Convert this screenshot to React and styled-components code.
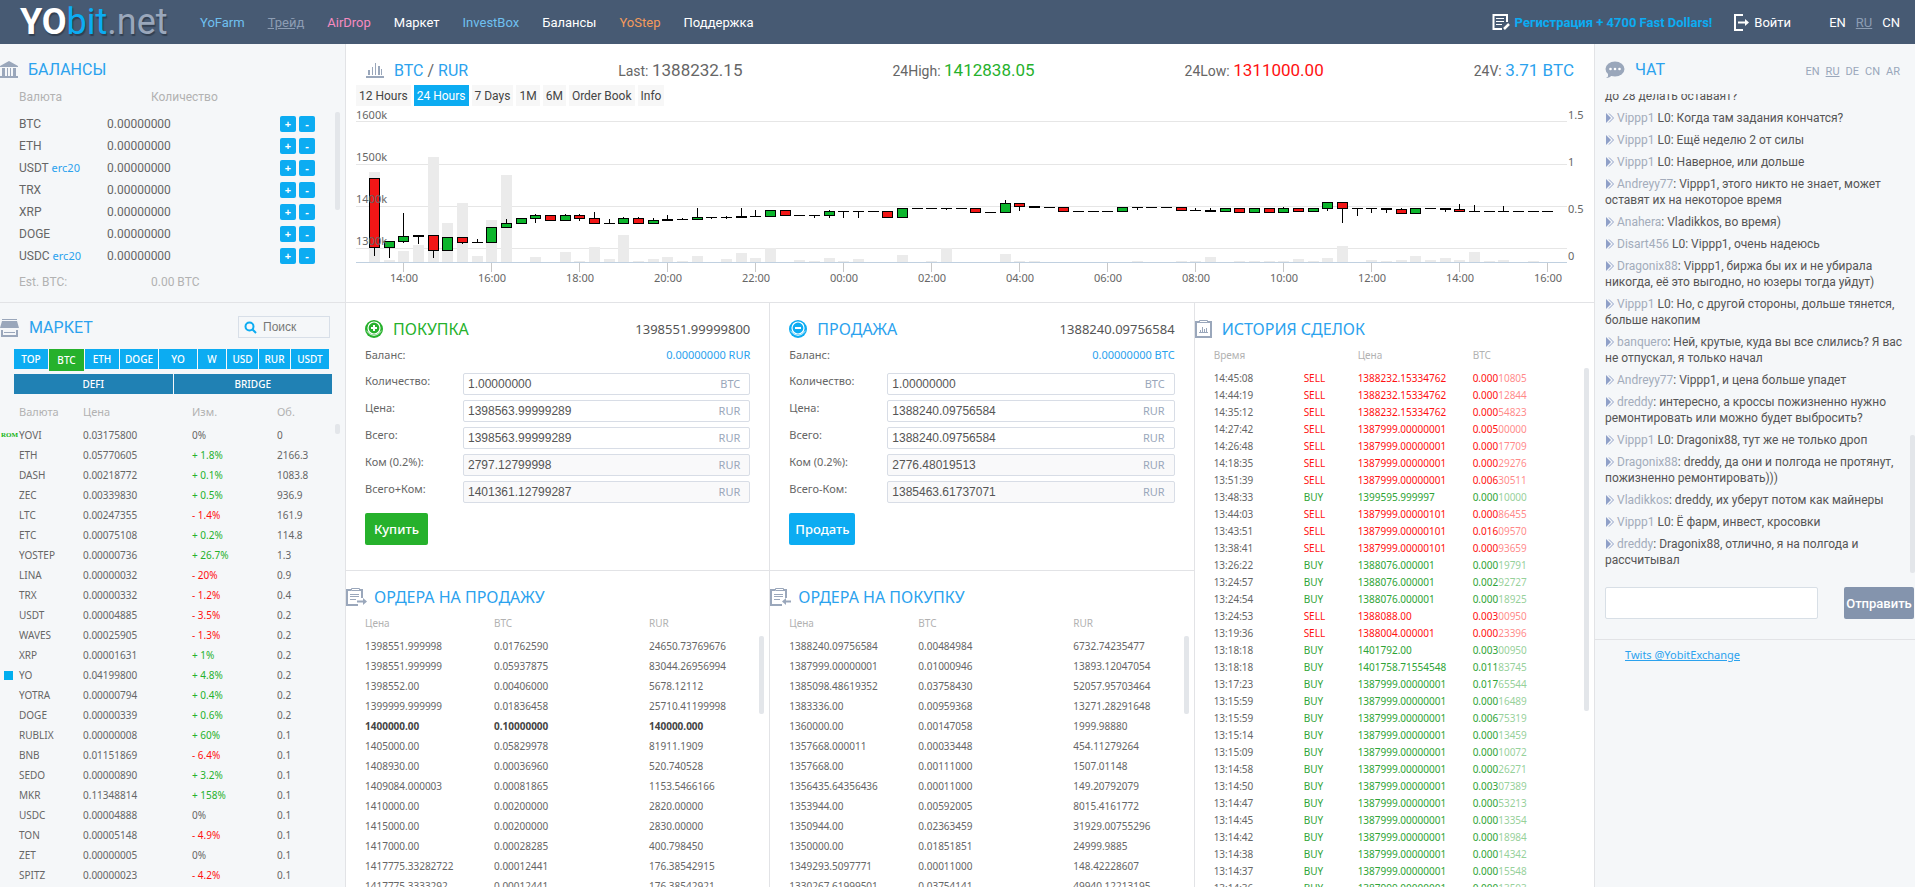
import React from 'react'
import styled, { createGlobalStyle } from 'styled-components'

const narrow = 'Roboto, "Liberation Sans", sans-serif'
const sans = '"Noto Sans", "Open Sans", sans-serif'
const arial = '"Liberation Sans", Arial, sans-serif'

const colors = {
  bar: '#475a73',
  blue: '#0cacf2',
  link: '#2ba2ee',
  deepBlue: '#2081b4',
  green: '#26b12c',
  red: '#ff1111',
  text: '#666',
  dark: '#555',
  muted: '#b2b2b2',
  icon: '#9aa7bb',
  panel: '#f5f7f9',
  line: '#e2e3e6'
}

const GlobalStyle = createGlobalStyle`
  * {
    box-sizing: border-box;
  }
  body {
    margin: 0;
    background: #fff;
    color: ${colors.text};
    font-family: ${narrow};
    font-size: 12px;
  }
  button, input {
    margin: 0;
    border: 0;
    font-family: inherit;
  }
  h1, h2, p {
    margin: 0;
    font-weight: normal;
  }
`

const Page = styled.div`
  height: 100vh;
  display: flex;
  flex-direction: column;
  overflow: hidden;
`

/* top bar */

const Topbar = styled.header`
  flex: none;
  display: flex;
  align-items: center;
  height: 44px;
  padding: 0 15px 0 20px;
  background: ${colors.bar};
  font-size: 13px;
`

const Logo = styled.a`
  width: 180px;
  color: ${colors.icon};
  font-size: 36px;
  line-height: 44px;
  text-decoration: none;
  text-shadow: 1px 2px 1px rgba(0, 0, 0, 0.3);
  b {
    color: #fff;
  }
  span {
    color: ${colors.blue};
  }
`

const Nav = styled.nav`
  display: flex;
  flex: 1;
  gap: 23px;
`

const NavLink = styled.a`
  color: ${props => props.$color || '#fff'};
  text-decoration: ${props => props.$current ? 'underline' : 'none'};
`

const Account = styled.div`
  display: flex;
  gap: 22px;
`

const AccountLink = styled.a`
  display: flex;
  align-items: center;
  gap: 5px;
  color: ${props => props.$promo ? colors.blue : '#fff'};
  font-weight: ${props => props.$promo ? 'bold' : 'normal'};
  text-decoration: none;
`

const BarLangs = styled.div`
  display: flex;
  gap: 10px;
  margin-left: 38px;
`

/* columns */

const Columns = styled.div`
  flex: 1;
  min-height: 0;
  display: grid;
  grid-template-columns: 346px minmax(0, 1fr) 321px;
`

const Side = styled.aside`
  display: flex;
  flex-direction: column;
  min-height: 0;
  background: ${colors.panel};
  border-right: ${props => props.$left ? '1px solid ' + colors.line : '0'};
  border-left: ${props => props.$left ? '0' : '1px solid ' + colors.line};
`

const Center = styled.main`
  display: flex;
  flex-direction: column;
  min-height: 0;
`

const Heading = styled.div`
  display: flex;
  align-items: center;
  gap: ${props => props.$tight ? 7 : 10}px;
  height: 24px;
  h2 {
    color: ${props => props.$green ? colors.green : colors.link};
    font-family: ${props => props.$wide ? sans : narrow};
    font-size: 16px;
    line-height: 24px;
  }
  svg {
    flex: none;
  }
`

const Slash = styled.span`
  color: ${colors.text};
`

const Scroll = styled.div`
  position: absolute;
  top: ${props => props.$top}px;
  right: 5px;
  width: 5px;
  height: ${props => props.$size}px;
  border-radius: 2px;
  background: #e3e6ea;
`

const Table = styled.table`
  width: 100%;
  border-collapse: collapse;
  table-layout: fixed;
  th {
    padding: 0;
    color: ${colors.muted};
    font-weight: normal;
    text-align: left;
  }
  td {
    padding: 0;
    white-space: nowrap;
  }
`

/* balances */

const Balances = styled.section`
  position: relative;
  flex: none;
  height: 259px;
  padding-top: 14px;
  border-bottom: 1px solid ${colors.line};
`

const BalanceHead = styled.div`
  display: grid;
  grid-template-columns: 132px 1fr;
  padding-left: 19px;
  color: ${colors.muted};
  line-height: 31px;
`

const BalanceTable = styled(Table)`
  margin-left: 19px;
  width: 296px;
  td {
    height: 22px;
    line-height: 20px;
  }
  td:first-child {
    width: 88px;
  }
  td:last-child {
    width: 35px;
  }
  a {
    color: ${colors.link};
    font-family: ${sans};
    font-size: 11px;
    text-decoration: none;
  }
`

const Pair = styled.div`
  display: flex;
  gap: 3px;
`

const Square = styled.button`
  width: 16px;
  height: 16px;
  padding: 0;
  border-radius: 2px;
  background: ${colors.blue};
  color: #fff;
  font-family: ${sans};
  font-size: 11px;
  font-weight: bold;
  line-height: 14px;
`

/* market */

const Market = styled.section`
  position: relative;
  flex: 1;
  min-height: 0;
  padding-top: 13px;
`

const MarketTop = styled.div`
  display: flex;
  justify-content: space-between;
  padding-right: 15px;
`

const Search = styled.label`
  display: flex;
  align-items: center;
  gap: 6px;
  width: 92px;
  height: 22px;
  padding-left: 5px;
  border: 1px solid #d8dfe8;
  input {
    width: 60px;
    padding: 0;
    background: transparent;
    font-family: ${arial};
    font-size: 12px;
    outline: 0;
  }
  input::placeholder {
    color: #777;
  }
`

const Tabs = styled.div`
  display: flex;
  align-items: flex-start;
  gap: 1px;
  height: 25px;
  margin-top: 9px;
  padding: 0 16px 0 14px;
`

const Tab = styled.button`
  flex: ${props => props.$grow || 34} 1 0;
  height: ${props => props.$active ? 22 : 20}px;
  padding: 0;
  background: ${props => props.$active ? colors.green : props.$deep ? colors.deepBlue : colors.blue};
  color: #fff;
  font-family: ${sans};
  font-size: 10px;
  font-weight: 500;
`

const WideTabs = styled(Tabs)`
  height: 20px;
  margin: 0;
  padding-right: 13px;
`

const MarketTable = styled(Table)`
  font-family: ${sans};
  font-size: 10px;
  th {
    height: 31px;
    padding-top: 4px;
    font-size: 11px;
  }
  td {
    height: 20px;
    line-height: 20px;
  }
`

const Change = styled.td`
  color: ${props => props.$value[0] === '+' ? colors.green : props.$value[0] === '-' ? colors.red : colors.text};
`

const Marker = styled.td`
  color: #14b514;
  font-family: "Liberation Serif", serif;
  font-size: 7px;
  font-weight: bold;
  text-align: center;
`

const Dot = styled.i`
  display: block;
  width: 9px;
  height: 9px;
  margin-left: 4px;
  background: #00aeef;
`

/* chart */

const ChartPanel = styled.section`
  height: 259px;
  flex: none;
  padding-top: 14px;
  border-bottom: 1px solid ${colors.line};
`

const Stats = styled.div`
  display: flex;
  align-items: center;
  justify-content: space-between;
  padding: 0 20px;
`

const Stat = styled.div`
  font-size: 14px;
  line-height: 24px;
  b {
    color: ${props => props.$color || colors.text};
    font-size: 17px;
    font-weight: normal;
  }
`

const Ranges = styled.div`
  display: flex;
  gap: 3px;
  padding: 2px 10px 1px;
`

const Range = styled.button`
  height: 21px;
  padding: 0 3px;
  background: ${props => props.$active ? colors.blue : '#f7f7f7'};
  color: ${props => props.$active ? '#fff' : '#444'};
  font-size: 12px;
`

const Plot = styled.svg`
  display: block;
  width: 100%;
  height: auto;
  text {
    fill: ${colors.text};
    font-family: ${sans};
    font-size: 11px;
  }
`

/* trading */

const Trading = styled.div`
  flex: 1;
  min-height: 0;
  display: grid;
  grid-template-columns: 34fr 34fr 32fr;
`

const Stack = styled.div`
  display: flex;
  flex-direction: column;
  min-width: 0;
  min-height: 0;
  border-right: ${props => props.$last ? '0' : '1px solid ' + colors.line};
`

const Form = styled.form`
  height: 268px;
  flex: none;
  padding: 14px 19px 0;
  border-bottom: 1px solid ${colors.line};
`

const FormTop = styled.div`
  display: flex;
  align-items: center;
  justify-content: space-between;
  > span {
    color: ${colors.dark};
    font-family: ${sans};
    font-size: 13px;
  }
`

const Line = styled.div`
  display: flex;
  justify-content: space-between;
  margin: 2px 0 6px;
  font-family: ${sans};
  font-size: 11px;
  line-height: 24px;
  span:last-child {
    color: ${colors.link};
  }
`

const Field = styled.label`
  display: flex;
  margin-bottom: 5px;
  font-family: ${sans};
  font-size: 11px;
  line-height: 16px;
`

const Name = styled.span`
  width: 98px;
`

const Box = styled.span`
  display: flex;
  flex: 1;
  align-items: center;
  height: 22px;
  padding: 0 9px 0 4px;
  border: 1px solid #d8dde6;
  border-radius: 2px;
  background: ${props => props.$locked ? '#f9f9fa' : '#fff'};
  color: ${colors.icon};
  input {
    flex: 1;
    min-width: 0;
    padding: 0;
    background: transparent;
    color: ${colors.dark};
    font-family: ${arial};
    font-size: 12px;
    outline: 0;
  }
`

const Submit = styled.button`
  height: 32px;
  margin-top: 5px;
  padding: 0 ${props => props.$green ? 9 : 6}px;
  border-radius: 2px;
  background: ${props => props.$green ? colors.green : colors.blue};
  color: #fff;
  font-family: ${sans};
  font-size: 13px;
  font-weight: 500;
`

const Orders = styled.section`
  position: relative;
  flex: 1;
  min-height: 0;
  padding-top: 14px;
`

const OrdersTable = styled(Table)`
  margin-left: 19px;
  width: calc(100% - 38px);
  font-family: ${sans};
  font-size: 10px;
  th {
    height: 27px;
  }
  td {
    height: 20px;
  }
  tr.total {
    color: #444;
    font-weight: bold;
  }
`

const History = styled.section`
  position: relative;
  padding-top: 14px;
`

const HistoryTable = styled(Table)`
  margin-left: 19px;
  width: calc(100% - 19px);
  font-family: ${sans};
  font-size: 10px;
  line-height: 14px;
  th {
    height: 28px;
  }
  td {
    height: 17px;
  }
`

const Trade = styled.tr`
  color: ${props => props.$buy ? '#2fa436' : colors.red};
  td:first-child {
    color: ${colors.text};
  }
  span {
    opacity: 0.5;
  }
`

/* chat */

const ChatTop = styled.div`
  display: flex;
  justify-content: space-between;
  align-items: center;
  padding: 14px 15px 0 10px;
`

const ChatLangs = styled.div`
  display: flex;
  gap: 6px;
  padding-top: 3px;
  font-size: 11px;
  a {
    color: ${colors.icon};
    text-decoration: none;
  }
  a.current {
    text-decoration: underline;
  }
`

const Messages = styled.div`
  position: relative;
  flex: none;
  display: flex;
  flex-direction: column;
  justify-content: flex-end;
  height: 480px;
  margin-top: 12px;
  padding: 0 10px;
  overflow: hidden;
`

const Message = styled.p`
  flex: none;
  margin-bottom: 6px;
  color: ${colors.dark};
  line-height: 16px;
  white-space: nowrap;
  svg {
    margin: 0 3px 0 1px;
    vertical-align: -1px;
  }
  b {
    color: #a3acbb;
    font-weight: normal;
  }
`

const ChatScroll = styled(Scroll)`
  right: 0;
`

const ChatForm = styled.form`
  flex: none;
  display: flex;
  justify-content: space-between;
  height: 66px;
  padding: 13px 1px 0 10px;
  border-bottom: 1px solid ${colors.line};
  input {
    width: 213px;
    height: 32px;
    padding: 0 6px;
    border: 1px solid #d8dfe6;
    border-radius: 2px;
  }
  button {
    width: 70px;
    height: 32px;
    padding: 0;
    border-radius: 2px;
    background: #8494ad;
    color: #fff;
    font-size: 13px;
    font-weight: 500;
  }
`

const Twits = styled.a`
  margin: 7px 0 0 30px;
  color: ${colors.link};
  font-family: ${sans};
  font-size: 11px;
`

/* icons */

const BankIcon = () => (
  <svg width='18' height='18' viewBox='0 0 18 18' fill={colors.icon}>
    <path d='M0 5 9 0l9 5v1H0zM2 7h3v8H2zM7 7h1v8H7zM10 7h1v8h-1zM13 7h3v8h-3zM0 15h18v2H0z' />
  </svg>
)

const ShopIcon = () => (
  <svg width='19' height='18' viewBox='0 0 19 18' fill={colors.icon}>
    <path d='M2 0h15v1H2zM2 2h15l2 7H0zM1 11h2v5h13v-5h2v7H1zM4 13h11v1H4z' />
  </svg>
)

const BarsIcon = () => (
  <svg width='18' height='17' viewBox='0 0 18 17' fill={colors.icon}>
    <path d='M2 8h2v5H2zM6 5h1v8H6zM9 1h1v12H9zM12 4h2v9h-2zM15 7h1v6h-1zM0 14h18v2H0z' />
  </svg>
)

const ChatIcon = () => (
  <svg width='20' height='18' viewBox='0 0 20 18'>
    <ellipse cx='10' cy='8' rx='9.5' ry='7.5' fill={colors.icon} />
    <path d='M3 12v3.500L1 17q4 0 6-3z' fill={colors.icon} />
    <circle cx='5.500' cy='8' r='1.300' fill='#fff' />
    <circle cx='10' cy='8' r='1.300' fill='#fff' />
    <circle cx='14.500' cy='8' r='1.300' fill='#fff' />
  </svg>
)

const CoinIcon = ({ color, plus }) => (
  <svg width='18' height='18' viewBox='0 0 18 18' fill='none'>
    <circle cx='9' cy='9' r='9' fill={color} />
    <circle cx='9' cy='8' r='6' stroke='#fff' strokeWidth='1.200' />
    <path d='M1.500 11q7.500 9 15 0' stroke='#fff' strokeWidth='.8' />
    <path d={plus ? 'M6 8h6M9 5v6' : 'M6 8h6'} stroke='#fff' strokeWidth='2' />
  </svg>
)

const OrdersIcon = ({ back }) => (
  <svg width='21' height='18' viewBox='0 0 21 18' fill='none' stroke={colors.icon}>
    <path d='M5 2H1v15h11M13 2h3v8' strokeWidth='2' />
    <path d='M5.500.5h8v2h-8zM4 6.500h9M4 8.500h9M4 11.500h6' />
    <path d={back ? 'M21 13.500h-6' : 'M11 13.500h7'} strokeWidth='2' />
    <path d={back ? 'm16 10-4 3.500 4 3.500z' : 'm17 10 4 3.500-4 3.500z'} fill={colors.icon} stroke='none' />
  </svg>
)

const HistoryIcon = () => (
  <svg width='17' height='18' viewBox='0 0 17 18' fill='none' stroke={colors.icon}>
    <path d='M1 2h15v15H1z' strokeWidth='2' />
    <path d='M4.500.5h8v2h-8z' fill='#fff' />
    <path d='M4 12.500h9M5.500 10v2M7.500 7v5M9.500 9v3M11.500 8v4' />
  </svg>
)

const SearchIcon = () => (
  <svg width='13' height='13' viewBox='0 0 13 13' fill='none' stroke={colors.blue} strokeWidth='2'>
    <circle cx='5.500' cy='5.500' r='4' />
    <path d='m8.500 8.500 3.500 3.500' />
  </svg>
)

const RegisterIcon = () => (
  <svg width='18' height='18' viewBox='0 0 18 18' fill='none' stroke='#fff'>
    <path d='M15 9V2H1.500v14H10' strokeWidth='2' />
    <path d='M4 5.500h8M4 8.500h8M4 11.500h6' />
    <path d='m12 16 5-5' strokeWidth='2.500' />
  </svg>
)

const LoginIcon = () => (
  <svg width='15' height='17' viewBox='0 0 15 17' fill='none' stroke='#fff' strokeWidth='2'>
    <path d='M9 1H1v15h8M4 8.500h8' />
    <path d='m11 5 4 3.500-4 3.500z' fill='#fff' stroke='none' />
  </svg>
)

const ReplyIcon = () => (
  <svg width='8' height='10' viewBox='0 0 8 10'>
    <path d='M0 0v10l5-5z' fill='#8fa0c8' />
    <path d='m3 .5 4.500 4.500L3 9.500' fill='none' stroke='#8fa0c8' />
  </svg>
)

/* data */

const parse = text => text.split('\n').map(row => row.split('|'))

const nav = [
  ['YoFarm', '#6fc0f0'],
  ['Трейд', '#8d9db3', true],
  ['AirDrop', '#f78bc0'],
  ['Маркет'],
  ['InvestBox', '#6fc0f0'],
  ['Балансы'],
  ['YoStep', '#f49a5c'],
  ['Поддержка']
]

const balances = ['BTC', 'ETH', 'USDT erc20', 'TRX', 'XRP', 'DOGE', 'USDC erc20']

const tabs = [['TOP', 34], ['BTC', 35], ['ETH', 34], ['DOGE', 38], ['YO', 38], ['W', 28], ['USD', 31], ['RUR', 31], ['USDT', 38]]

const market = parse(`YOVI|0.03175800|0%|0
ETH|0.05770605|+ 1.8%|2166.3
DASH|0.00218772|+ 0.1%|1083.8
ZEC|0.00339830|+ 0.5%|936.9
LTC|0.00247355|- 1.4%|161.9
ETC|0.00075108|+ 0.2%|114.8
YOSTEP|0.00000736|+ 26.7%|1.3
LINA|0.00000032|- 20%|0.9
TRX|0.00000332|- 1.2%|0.4
USDT|0.00004885|- 3.5%|0.2
WAVES|0.00025905|- 1.3%|0.2
XRP|0.00001631|+ 1%|0.2
YO|0.04199800|+ 4.8%|0.2
YOTRA|0.00000794|+ 0.4%|0.2
DOGE|0.00000339|+ 0.6%|0.2
RUBLIX|0.00000008|+ 60%|0.1
BNB|0.01151869|- 6.4%|0.1
SEDO|0.00000890|+ 3.2%|0.1
MKR|0.11348814|+ 158%|0.1
USDC|0.00004888|0%|0.1
TON|0.00005148|- 4.9%|0.1
ZET|0.00000005|0%|0.1
SPITZ|0.00000023|- 4.2%|0.1`)

const sellOrders = parse(`1398551.999998|0.01762590|24650.73769676
1398551.999999|0.05937875|83044.26956994
1398552.00|0.00406000|5678.12112
1399999.999999|0.01836458|25710.41199998
1400000.00|0.10000000|140000.000
1405000.00|0.05829978|81911.1909
1408930.00|0.00036960|520.740528
1409084.000003|0.00081865|1153.5466166
1410000.00|0.00200000|2820.00000
1415000.00|0.00200000|2830.00000
1417000.00|0.00028285|400.798450
1417775.33282722|0.00012441|176.38542915
1417775.3333292|0.00012441|176.38542921`)

const buyOrders = parse(`1388240.09756584|0.00484984|6732.74235477
1387999.00000001|0.01000946|13893.12047054
1385098.48619352|0.03758430|52057.95703464
1383336.00|0.00959368|13271.28291648
1360000.00|0.00147058|1999.98880
1357668.000011|0.00033448|454.11279264
1357668.00|0.00111000|1507.01148
1356435.64356436|0.00011000|149.20792079
1353944.00|0.00592005|8015.4161772
1350944.00|0.02363459|31929.00755296
1350000.00|0.01851851|24999.9885
1349293.5097771|0.00011000|148.42228607
1330267.61999501|0.03754141|49940.12213195`)

const trades = parse(`14:45:08|SELL|1388232.15334762|0.00010805
14:44:19|SELL|1388232.15334762|0.00012844
14:35:12|SELL|1388232.15334762|0.00054823
14:27:42|SELL|1387999.00000001|0.00500000
14:26:48|SELL|1387999.00000001|0.00017709
14:18:35|SELL|1387999.00000001|0.00029276
13:51:39|SELL|1387999.00000001|0.00630511
13:48:33|BUY|1399595.999997|0.00010000
13:44:03|SELL|1387999.00000101|0.00086455
13:43:51|SELL|1387999.00000101|0.01609570
13:38:41|SELL|1387999.00000101|0.00093659
13:26:22|BUY|1388076.000001|0.00019791
13:24:57|BUY|1388076.000001|0.00292727
13:24:54|BUY|1388076.000001|0.00018925
13:24:53|SELL|1388088.00|0.00300950
13:19:36|SELL|1388004.000001|0.00023396
13:18:18|BUY|1401792.00|0.00300950
13:18:18|BUY|1401758.71554548|0.01183745
13:17:23|BUY|1387999.00000001|0.01765544
13:15:59|BUY|1387999.00000001|0.00016489
13:15:59|BUY|1387999.00000001|0.00675319
13:15:14|BUY|1387999.00000001|0.00013459
13:15:09|BUY|1387999.00000001|0.00010072
13:14:58|BUY|1387999.00000001|0.00026271
13:14:50|BUY|1387999.00000001|0.00307389
13:14:47|BUY|1387999.00000001|0.00053213
13:14:45|BUY|1387999.00000001|0.00013354
13:14:42|BUY|1387999.00000001|0.00018984
13:14:38|BUY|1387999.00000001|0.00014342
13:14:37|BUY|1387999.00000001|0.00015548
13:14:36|BUY|1387999.00000001|0.00013503`)

const messages = [
  ['Vippp1', ' L0: Когда там задания кончатся?'],
  ['Vippp1', ' L0: Ещё неделю 2 от силы'],
  ['Vippp1', ' L0: Наверное, или дольше'],
  ['Andreyy77', ': Vippp1, этого никто не знает, может', 'оставят их на некоторое время'],
  ['Anahera', ': Vladikkos, во время)'],
  ['Disart456', ' L0: Vippp1, очень надеюсь'],
  ['Dragonix88', ': Vippp1, биржа бы их и не убирала', 'никогда, её это выгодно, но юзеры тогда уйдут)'],
  ['Vippp1', ' L0: Но, с другой стороны, дольше тянется,', 'больше накопим'],
  ['banquero', ': Ней, крутые, куда вы все слились? Я вас', 'не отпускал, я только начал'],
  ['Andreyy77', ': Vippp1, и цена больше упадет'],
  ['dreddy', ': интересно, а кроссы пожизненно нужно', 'ремонтировать или можно будет выбросить?'],
  ['Vippp1', ' L0: Dragonix88, тут же не только дроп'],
  ['Dragonix88', ': dreddy, да они и полгода не протянут,', 'пожизненно ремонтировать)))'],
  ['Vladikkos', ': dreddy, их уберут потом как майнеры'],
  ['Vippp1', ' L0: Ё фарм, инвест, кросовки'],
  ['dreddy', ': Dragonix88, отлично, я на полгода и', 'рассчитывал']
]

// g = up, r = down, k = flat: kind, body top, body bottom, high, low
const candles = `r 77 147 77 155,g 140 147 140 157,g 135 141 112 142,k 134 136 134 143,r 134 150 134 157,g 136 150,r 136 142 136 143,k 141 142 138,g 126 142,g 122 127 118
g 117 123,g 114 118 113 122,r 114 120,g 114 120 113,r 114 118 113 120,r 117 123 111,k 122 123 118,g 117 123 116,r 117 123 116,g 119 123 117
k 118 120 114,k 118 119 117,g 116 119 107,k 116 117 116 118,k 116 117 115 118,k 115 117 107,k 115 116 109,g 109 116,r 109 115,k 114 115
k 114 115 114 117,g 110 115 109 117,k 110 111 110 117,k 110 111 110 117,k 110 111,r 110 117,g 107 117,k 107 108,k 107 108,k 107 108 107 109
k 107 108,r 107 112,k 111 112,g 102 112 99,r 102 106 102 110,k 105 107,k 106 107,r 106 111,k 110 111,k 110 111
k 110 111,g 106 111,k 106 107 106 109,k 106 107,k 106 107,r 106 110,k 109 110 107,k 109 111 107,g 107 111,r 107 112
g 107 112,r 107 112,g 107 112 106,r 107 111,g 107 111,g 101 108 101 110,r 101 108 101 122,k 107 108 107 115,k 107 108 107 112,k 107 109 107 112
r 108 113 107,g 107 113,k 107 108,k 107 109 107 111,r 108 111 103,k 110 111 104,k 110 111,k 110 111 105,k 110 111,k 110 111
k 110 111`.split(/[,\n]/).map(item => item.split(' '))

const volumes = [
  90, 2, 11, 17, 105, 39, 59, 6, 42, 87, 0, 5, 0, 10, 1, 15, 3, 27, 1, 3, 5, 1, 6, 0, 3, 9, 4, 14, 0, 2, 1, 4, 1, 3, 0, 0, 7, 0, 1, 14,
  0, 0, 0, 8, 1, 1, 0, 0, 0, 0, 0, 0, 1, 0, 0, 1, 1, 5, 0, 1, 1, 1, 1, 3, 1, 4, 16, 0, 2, 1, 2, 6, 2, 4, 2, 10, 1, 2, 0, 1
]

const hours = ['14:00', '16:00', '18:00', '20:00', '22:00', '00:00', '02:00', '04:00', '06:00', '08:00', '10:00', '12:00', '14:00', '16:00']

const slot = i => Math.round(28 + i * 14.667)

const Chart = () => (
  <Plot viewBox='0 6 1248 190' shapeRendering='crispEdges'>
    {[20, 63, 105, 147].map(y => <rect key={y} x='10' y={y} width='1211' height='1' fill='#e6e6e6' />)}
    {volumes.map((v, i) => <rect key={i} x={slot(i) - 5} y={161 - v} width='11' height={v} fill='#ebebeb' />)}
    <rect x='10' y='161' width='1211' height='1' fill='#c0d0e0' />
    {candles.map(([kind, top, bottom, high = top, low = bottom], i) => (
      <g key={i}>
        <rect x={slot(i)} y={high} width='1' height={low - high} />
        <rect x={slot(i) - 5} y={top} width='11' height={bottom - top} />
        {kind !== 'k' && (
          <rect x={slot(i) - 4} y={+top + 1} width='9' height={bottom - top - 2} fill={kind === 'g' ? '#0cb52c' : '#f21616'} />
        )}
      </g>
    ))}
    {['1600k', '1500k', '1400k', '1300k'].map((t, i) => <text key={t} x='10' y={18 + i * 42}>{t}</text>)}
    {['1.5', '1', '0.5', '0'].map((t, i) => <text key={t} x='1222' y={18 + i * 47}>{t}</text>)}
    {hours.map((t, i) => (
      <g key={i}>
        <rect x={slot(2 + i * 6)} y='162' width='1' height='9' fill='#c8c8c8' />
        <text x={slot(2 + i * 6) + 1} y='181' textAnchor='middle'>{t}</text>
      </g>
    ))}
  </Plot>
)

const TradeForm = ({ buy, id, title, price, balance, rows, action }) => (
  <Form>
    <FormTop>
      <Heading $wide $green={buy}>
        <CoinIcon plus={buy} color={buy ? colors.green : colors.blue} />
        <h2>{title}</h2>
      </Heading>
      <span>{price}</span>
    </FormTop>
    <Line><span>Баланс:</span><span>{balance}</span></Line>
    {rows.map(([label, value, unit], i) => (
      <Field key={label} htmlFor={id + i}>
        <Name>{label}</Name>
        <Box $locked={i > 2}>
          <input id={id + i} defaultValue={value} readOnly={i > 2} />
          {unit}
        </Box>
      </Field>
    ))}
    <Submit type='button' $green={buy}>{action}</Submit>
  </Form>
)

const OrderBook = ({ title, back, rows, total }) => (
  <Orders>
    <Heading $wide $tight>
      <OrdersIcon back={back} />
      <h2>{title}</h2>
    </Heading>
    <OrdersTable>
      <thead>
        <tr><th width='129'>Цена</th><th width='155'>BTC</th><th>RUR</th></tr>
      </thead>
      <tbody>
        {rows.map((row, i) => (
          <tr key={i} className={i === total ? 'total' : undefined}>
            {row.map((cell, j) => <td key={j}>{cell}</td>)}
          </tr>
        ))}
      </tbody>
    </OrdersTable>
    <Scroll $top={65} $size={78} />
  </Orders>
)

const App = () => (
  <>
    <GlobalStyle />
    <Page>
      <Topbar>
        <Logo href='#'><b>YO</b><span>bit</span>.net</Logo>
        <Nav>
          {nav.map(([text, color, current]) => (
            <NavLink key={text} href='#' $color={color} $current={current}>{text}</NavLink>
          ))}
        </Nav>
        <Account>
          <AccountLink href='#' $promo><RegisterIcon />Регистрация + 4700 Fast Dollars!</AccountLink>
          <AccountLink href='#'><LoginIcon />Войти</AccountLink>
        </Account>
        <BarLangs>
          <NavLink href='#'>EN</NavLink>
          <NavLink href='#' $color='#8d9db3' $current>RU</NavLink>
          <NavLink href='#'>CN</NavLink>
        </BarLangs>
      </Topbar>
      <Columns>
        <Side $left>
          <Balances>
            <Heading><BankIcon /><h2>БАЛАНСЫ</h2></Heading>
            <BalanceHead><span>Валюта</span><span>Количество</span></BalanceHead>
            <BalanceTable>
              <tbody>
                {balances.map(name => {
                  const [coin, net] = name.split(' ')
                  return (
                    <tr key={name}>
                      <td>{coin} {net && <a href='#'>{net}</a>}</td>
                      <td>0.00000000</td>
                      <td><Pair><Square>+</Square><Square>-</Square></Pair></td>
                    </tr>
                  )
                })}
              </tbody>
            </BalanceTable>
            <BalanceHead><span>Est. BTC:</span><span>0.00 BTC</span></BalanceHead>
            <Scroll $top={68} $size={98} />
          </Balances>
          <Market>
            <MarketTop>
              <Heading><ShopIcon /><h2>МАРКЕТ</h2></Heading>
              <Search><SearchIcon /><input aria-label='Поиск' placeholder='Поиск' /></Search>
            </MarketTop>
            <Tabs>
              {tabs.map(([name, grow]) => <Tab key={name} $grow={grow} $active={name === 'BTC'}>{name}</Tab>)}
            </Tabs>
            <WideTabs><Tab $deep>DEFI</Tab><Tab $deep>BRIDGE</Tab></WideTabs>
            <MarketTable>
              <thead>
                <tr>
                  <th width='19' /><th width='64'>Валюта</th><th width='109'>Цена</th><th width='85'>Изм.</th><th>Об.</th>
                </tr>
              </thead>
              <tbody>
                {market.map(([coin, price, change, volume]) => (
                  <tr key={coin}>
                    <Marker>{coin === 'YOVI' ? 'ROM' : coin === 'YO' ? <Dot /> : null}</Marker>
                    <td>{coin}</td>
                    <td>{price}</td>
                    <Change $value={change}>{change}</Change>
                    <td>{volume}</td>
                  </tr>
                ))}
              </tbody>
            </MarketTable>
            <Scroll $top={121} $size={10} />
          </Market>
        </Side>
        <Center>
          <ChartPanel>
            <Stats>
              <Heading><BarsIcon /><h2>BTC <Slash>/</Slash> RUR</h2></Heading>
              <Stat>Last: <b>1388232.15</b></Stat>
              <Stat $color={colors.green}>24High: <b>1412838.05</b></Stat>
              <Stat $color={colors.red}>24Low: <b>1311000.00</b></Stat>
              <Stat $color={colors.link}>24V: <b>3.71 BTC</b></Stat>
            </Stats>
            <Ranges>
              {['12 Hours', '24 Hours', '7 Days', '1M', '6M', 'Order Book', 'Info'].map(text => (
                <Range key={text} $active={text === '24 Hours'}>{text}</Range>
              ))}
            </Ranges>
            <Chart />
          </ChartPanel>
          <Trading>
            <Stack>
              <TradeForm
                buy
                id='buy'
                title='ПОКУПКА'
                price='1398551.99999800'
                balance='0.00000000 RUR'
                action='Купить'
                rows={[
                  ['Количество:', '1.00000000', 'BTC'],
                  ['Цена:', '1398563.99999289', 'RUR'],
                  ['Всего:', '1398563.99999289', 'RUR'],
                  ['Ком (0.2%):', '2797.12799998', 'RUR'],
                  ['Всего+Ком:', '1401361.12799287', 'RUR']
                ]}
              />
              <OrderBook title='ОРДЕРА НА ПРОДАЖУ' rows={sellOrders} total={4} />
            </Stack>
            <Stack>
              <TradeForm
                id='sell'
                title='ПРОДАЖА'
                price='1388240.09756584'
                balance='0.00000000 BTC'
                action='Продать'
                rows={[
                  ['Количество:', '1.00000000', 'BTC'],
                  ['Цена:', '1388240.09756584', 'RUR'],
                  ['Всего:', '1388240.09756584', 'RUR'],
                  ['Ком (0.2%):', '2776.48019513', 'RUR'],
                  ['Всего-Ком:', '1385463.61737071', 'RUR']
                ]}
              />
              <OrderBook back title='ОРДЕРА НА ПОКУПКУ' rows={buyOrders} />
            </Stack>
            <Stack $last>
              <History>
                <Heading $wide><HistoryIcon /><h2>ИСТОРИЯ СДЕЛОК</h2></Heading>
                <HistoryTable>
                  <thead>
                    <tr><th width='90'>Время</th><th width='54' /><th width='115'>Цена</th><th>BTC</th></tr>
                  </thead>
                  <tbody>
                    {trades.map(([time, type, price, amount], i) => (
                      <Trade key={i} $buy={type === 'BUY'}>
                        <td>{time}</td>
                        <td>{type}</td>
                        <td>{price}</td>
                        <td>{amount.slice(0, 5)}<span>{amount.slice(5)}</span></td>
                      </Trade>
                    ))}
                  </tbody>
                </HistoryTable>
                <Scroll $top={65} $size={343} />
              </History>
            </Stack>
          </Trading>
        </Center>
        <Side>
          <ChatTop>
            <Heading><ChatIcon /><h2>ЧАТ</h2></Heading>
            <ChatLangs>
              {['EN', 'RU', 'DE', 'CN', 'AR'].map(lang => (
                <a key={lang} href='#' className={lang === 'RU' ? 'current' : undefined}>{lang}</a>
              ))}
            </ChatLangs>
          </ChatTop>
          <Messages>
            <Message>до 28 делать оставаят?</Message>
            {messages.map(([name, text, rest], i) => (
              <Message key={i}>
                <ReplyIcon /><b>{name}</b>{text}
                {rest && <><br />{rest}</>}
              </Message>
            ))}
            <ChatScroll $top={341} $size={138} />
          </Messages>
          <ChatForm>
            <input aria-label='Сообщение' />
            <button type='button'>Отправить</button>
          </ChatForm>
          <Twits href='#'>Twits @YobitExchange</Twits>
        </Side>
      </Columns>
    </Page>
  </>
)

export default App
